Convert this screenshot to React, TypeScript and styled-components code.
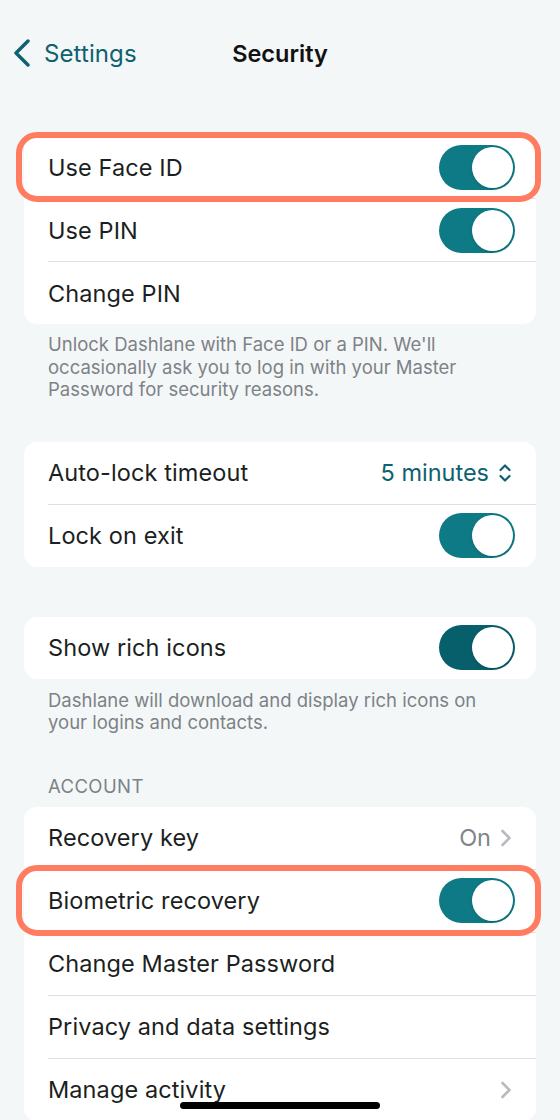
import styled, { createGlobalStyle } from "styled-components";

const GlobalStyle = createGlobalStyle`
  html, body {
    margin: 0;
    padding: 0;
    background: #f4f7f8;
  }
  body {
    font-family: Inter, "Noto Sans", "Liberation Sans", sans-serif;
    -webkit-font-smoothing: antialiased;
  }
`;

const Screen = styled.div`
  position: relative;
  width: 560px;
  height: 1120px;
  overflow: hidden;
  background: #f4f7f8;
`;

const NavBar = styled.div`
  position: relative;
  height: 106px;
  display: flex;
  align-items: center;
  justify-content: center;
`;

const BackButton = styled.div`
  position: absolute;
  left: 13px;
  top: 0;
  bottom: 0;
  display: flex;
  align-items: center;
  gap: 13px;
  color: #0d6170;
  font-size: 24px;
  letter-spacing: 0.1px;
`;

const Title = styled.div`
  font-size: 23.5px;
  font-weight: 600;
  color: #111;
`;

const Section = styled.div<{ $top: number }>`
  padding: 0 24px;
  margin-top: ${(p) => p.$top}px;
`;

const Card = styled.div`
  background: #fff;
  border-radius: 13px;
`;

const Row = styled.div`
  position: relative;
  display: flex;
  padding-left: 24px;
`;

const RowBody = styled.div<{ $divider?: boolean }>`
  flex: 1;
  height: 62px;
  display: flex;
  align-items: center;
  justify-content: space-between;
  padding-right: 21px;
  border-top: ${(p) => (p.$divider ? "1px solid #dedfe2" : "none")};
`;

const Label = styled.span`
  font-size: 23.5px;
  color: #1c1f22;
  letter-spacing: 0.1px;
`;

const Value = styled.span<{ $accent?: boolean }>`
  display: flex;
  align-items: center;
  gap: 9px;
  margin-right: 3px;
  font-size: 23.5px;
  color: ${(p) => (p.$accent ? "#0d6170" : "#7f858a")};
`;

const Chevron = styled.span`
  display: flex;
  margin-right: 3px;
`;

const Highlight = styled.div`
  position: absolute;
  top: -4px;
  bottom: -4px;
  left: -8px;
  right: -5px;
  border: 6px solid #ff7c60;
  border-radius: 21px;
  pointer-events: none;
  z-index: 2;
`;

const Switch = styled.div<{ $dark?: boolean }>`
  position: relative;
  width: 76px;
  height: 45px;
  border-radius: 23px;
  background: ${(p) => (p.$dark ? "#075f6b" : "#0e7a85")};
  &::after {
    content: "";
    position: absolute;
    right: 2px;
    top: 2px;
    width: 41px;
    height: 41px;
    border-radius: 50%;
    background: #fff;
    box-shadow: 0 1px 3px rgba(0, 0, 0, 0.18);
  }
`;

const Footer = styled.div<{ $top: number }>`
  margin-top: ${(p) => p.$top}px;
  padding: 0 62px 0 48px;
  font-size: 18.5px;
  line-height: 22.5px;
  color: #7d8287;
`;

const Header = styled.div<{ $top: number }>`
  margin-top: ${(p) => p.$top}px;
  padding: 0 48px 10px;
  font-size: 18.5px;
  line-height: 22px;
  color: #7d8287;
  letter-spacing: 0.4px;
`;

const HomeIndicator = styled.div`
  position: absolute;
  left: 180px;
  width: 200px;
  bottom: 11px;
  height: 7px;
  border-radius: 4px;
  background: #000;
`;

function BackChevron() {
  return (
    <svg width="18" height="28" viewBox="0 0 18 28">
      <path d="M15 2 L3 14 L15 26" fill="none" stroke="#0d6170" strokeWidth="3.4" strokeLinecap="round" strokeLinejoin="round" />
    </svg>
  );
}

function Disclosure() {
  return (
    <svg width="12" height="20" viewBox="0 0 12 20">
      <path d="M2.5 3 L9.5 10 L2.5 17" fill="none" stroke="#b7bbbf" strokeWidth="2.6" strokeLinecap="round" strokeLinejoin="round" />
    </svg>
  );
}

function UpDown() {
  return (
    <svg width="14" height="22" viewBox="0 0 14 22">
      <path d="M2.5 8 L7 3.5 L11.5 8 M2.5 14 L7 18.5 L11.5 14" fill="none" stroke="#0d6170" strokeWidth="2.2" strokeLinecap="round" strokeLinejoin="round" />
    </svg>
  );
}

interface IRow {
  label: string;
  divider?: boolean;
  highlight?: boolean;
  right?: React.ReactNode;
}

function SettingRow({ label, divider, highlight, right }: IRow) {
  return (
    <Row>
      <RowBody $divider={divider}>
        <Label>{label}</Label>
        {right}
      </RowBody>
      {highlight && <Highlight />}
    </Row>
  );
}

export default function App() {
  return (
    <Screen>
      <GlobalStyle />
      <NavBar>
        <BackButton>
          <BackChevron />
          <span>Settings</span>
        </BackButton>
        <Title>Security</Title>
      </NavBar>

      <Section $top={30}>
        <Card>
          <SettingRow label="Use Face ID" highlight right={<Switch />} />
          <SettingRow label="Use PIN" divider right={<Switch />} />
          <SettingRow label="Change PIN" divider />
        </Card>
      </Section>
      <Footer $top={9}>
        Unlock Dashlane with Face ID or a PIN. We'll occasionally ask you to log in with your Master Password for security reasons.
      </Footer>

      <Section $top={41}>
        <Card>
          <SettingRow
            label="Auto-lock timeout"
            right={
              <Value $accent>
                5 minutes
                <UpDown />
              </Value>
            }
          />
          <SettingRow label="Lock on exit" divider right={<Switch />} />
        </Card>
      </Section>

      <Section $top={50}>
        <Card>
          <SettingRow label="Show rich icons" right={<Switch $dark />} />
        </Card>
      </Section>
      <Footer $top={10}>
        Dashlane will download and display rich icons on your logins and contacts.
      </Footer>

      <Header $top={41}>ACCOUNT</Header>
      <Section $top={0}>
        <Card>
          <SettingRow
            label="Recovery key"
            right={
              <Value>
                On
                <Disclosure />
              </Value>
            }
          />
          <SettingRow label="Biometric recovery" divider highlight right={<Switch />} />
          <SettingRow label="Change Master Password" divider />
          <SettingRow label="Privacy and data settings" divider />
          <SettingRow
            label="Manage activity"
            divider
            right={
              <Chevron>
                <Disclosure />
              </Chevron>
            }
          />
        </Card>
      </Section>

      <HomeIndicator />
    </Screen>
  );
}
